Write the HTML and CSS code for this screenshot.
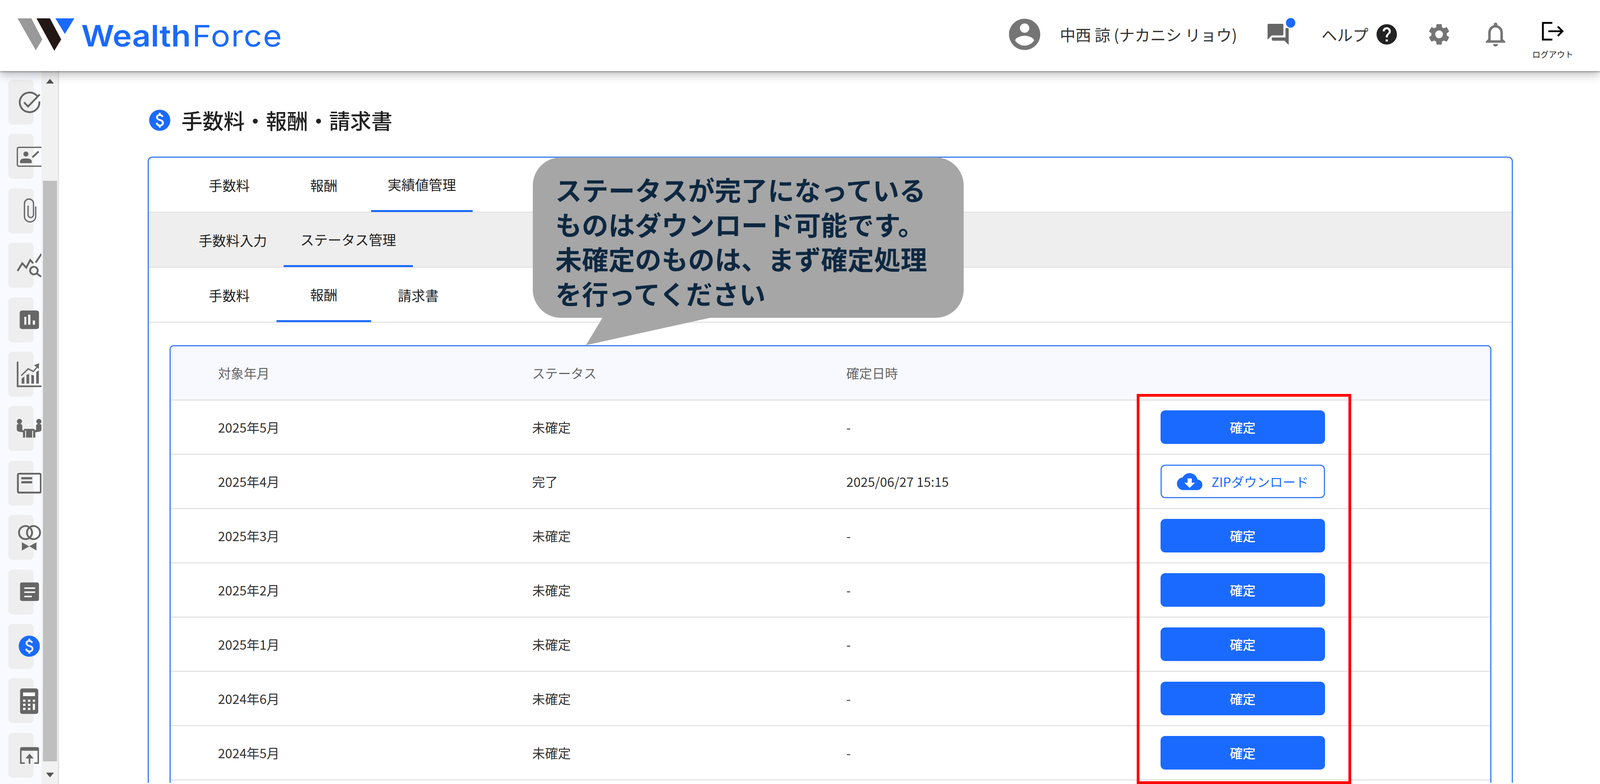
FILE: index.html
```html
<!DOCTYPE html>
<html lang="ja">
<head>
    <meta charset="UTF-8">
    <title>WealthForce 手数料・報酬・請求書</title>
    <link rel="stylesheet" href="styles.css">
</head>
<body>
    <header class="header">
        <svg class="logo-mark" viewBox="48 43 156 90">
            <polygon fill="#999999" points="48,44 86,44 116,102 98,132"/>
            <polygon fill="#231815" points="100,44 137,44 168,102 149,133"/>
            <polygon fill="#1a6aff" points="152,44 204,44 178,87"/>
        </svg>
        <div class="logo-text"><span class="logo-strong">Wealth</span><span class="logo-light">Force</span></div>
        <div class="header-right">
            <svg class="avatar" viewBox="2 2 20 20"><path d="M12 2C6.48 2 2 6.48 2 12s4.48 10 10 10 10-4.48 10-10S17.52 2 12 2zm0 3c1.66 0 3 1.34 3 3s-1.34 3-3 3-3-1.34-3-3 1.34-3 3-3zm0 14.2c-2.5 0-4.71-1.28-6-3.22.03-1.99 4-3.08 6-3.08 1.99 0 5.97 1.09 6 3.08-1.29 1.94-3.5 3.22-6 3.22z"/></svg>
            <span class="user-name">中西 諒 (ナカニシ リョウ)</span>
            <div class="chat">
                <svg class="chat-icon" viewBox="2 2 20 20"><path d="M21 6h-2v9H6v2c0 .55.45 1 1 1h11l4 4V7c0-.55-.45-1-1-1zm-4 6V3c0-.55-.45-1-1-1H3c-.55 0-1 .45-1 1v14l4-4h10c.55 0 1-.45 1-1z"/></svg>
                <span class="chat-dot"></span>
            </div>
            <span class="help-label">ヘルプ</span>
            <svg class="help-icon" viewBox="2 2 20 20"><path d="M12 2C6.48 2 2 6.48 2 12s4.48 10 10 10 10-4.48 10-10S17.52 2 12 2zm1 17h-2v-2h2v2zm2.07-7.75l-.9.92C13.45 12.9 13 13.5 13 15h-2v-.5c0-1.1.45-2.1 1.17-2.83l1.24-1.26c.37-.36.59-.86.59-1.41 0-1.1-.9-2-2-2s-2 .9-2 2H8c0-2.21 1.79-4 4-4s4 1.79 4 4c0 .88-.36 1.68-.93 2.25z"/></svg>
            <svg class="gear-icon" viewBox="2.5 2 19 20"><path d="M19.14 12.94c.04-.3.06-.61.06-.94 0-.32-.02-.64-.07-.94l2.03-1.58c.18-.14.23-.41.12-.61l-1.92-3.32c-.12-.22-.37-.29-.59-.22l-2.39.96c-.5-.38-1.03-.7-1.62-.94l-.36-2.54c-.04-.24-.24-.41-.48-.41h-3.84c-.24 0-.43.17-.47.41l-.36 2.54c-.59.24-1.13.57-1.62.94l-2.39-.96c-.22-.08-.47 0-.59.22L2.74 8.87c-.12.21-.08.47.12.61l2.03 1.58c-.05.3-.09.63-.09.94s.02.64.07.94l-2.03 1.58c-.18.14-.23.41-.12.61l1.92 3.32c.12.22.37.29.59.22l2.39-.96c.5.38 1.03.7 1.62.94l.36 2.54c.05.24.24.41.48.41h3.84c.24 0 .44-.17.47-.41l.36-2.54c.59-.24 1.13-.56 1.62-.94l2.39.96c.22.08.47 0 .59-.22l1.92-3.32c.12-.22.07-.47-.12-.61l-2.01-1.58zM12 15.6c-1.98 0-3.6-1.62-3.6-3.6s1.62-3.6 3.6-3.6 3.6 1.62 3.6 3.6-1.62 3.6-3.6 3.6z"/></svg>
            <svg class="bell-icon" viewBox="4 2.5 16 19.5"><path d="M12 22c1.1 0 2-.9 2-2h-4c0 1.1.9 2 2 2zm6-6v-5c0-3.07-1.63-5.64-4.5-6.32V4c0-.83-.67-1.5-1.5-1.5s-1.5.67-1.5 1.5v.68C7.64 5.36 6 7.92 6 11v5l-2 2v1h16v-1l-2-2zm-2 1H8v-6c0-2.48 1.51-4.5 4-4.5s4 2.02 4 4.5v6z"/></svg>
            <div class="logout">
                <svg class="logout-icon" viewBox="0 0 60 52">
                    <path d="M29 3H3v46h26"/>
                    <path d="M18 26h38"/>
                    <path d="M44 13l13 13-13 13"/>
                </svg>
                <span class="logout-label">ログアウト</span>
            </div>
        </div>
    </header>

    <div class="shell">
        <aside class="sidebar">
            <nav class="side-nav">
                <div class="side-tile">
                    <svg class="side-icon" viewBox="0 0 68 68">
                        <path class="ln" d="M55.7 16.6A27 27 0 1 0 62 31.6"/>
                        <path class="ln" d="M20 34l11 11.500 32-33"/>
                    </svg>
                </div>
                <div class="side-tile">
                    <svg class="side-icon" viewBox="0 0 68 68">
                        <rect class="ln thin" x="1.500" y="8.500" width="72" height="52" rx="4"/>
                        <circle class="fl" cx="25" cy="27" r="7"/>
                        <path class="fl" d="M9 52v-5q0-8 16-8t16 8v5z"/>
                        <path class="ln" d="M43 36l17-16"/>
                    </svg>
                </div>
                <div class="side-tile">
                    <svg class="side-icon" viewBox="0 0 68 68">
                        <path class="ln thin" d="M52 22V49A15.500 15.500 0 0 1 21 49V14A12.500 12.500 0 0 1 46 14V45A7.500 7.500 0 0 1 31 45V20"/>
                    </svg>
                </div>
                <div class="side-tile">
                    <svg class="side-icon" viewBox="0 0 68 68">
                        <path class="ln" d="M2 49l13-21 11 12 11-21 8 9"/>
                        <path class="ln" d="M52 26L68 2"/>
                        <circle class="ln" cx="47" cy="48" r="10.500"/>
                        <path class="ln" d="M55 56l12 9"/>
                    </svg>
                </div>
                <div class="side-tile">
                    <svg class="side-icon" viewBox="0 0 68 68">
                        <rect class="fl" x="8" y="8.500" width="53" height="51" rx="6"/>
                        <rect class="wh" x="20.700" y="26" width="5.500" height="21.500"/>
                        <rect class="wh" x="31.300" y="20" width="6" height="27.500"/>
                        <rect class="wh" x="44" y="36" width="6" height="11.500"/>
                    </svg>
                </div>
                <div class="side-tile">
                    <svg class="side-icon" viewBox="0 0 68 68">
                        <path class="fl" d="M0 0h4.500v65.500H68V70H0z"/>
                        <path class="fl" d="M13.300 46l7.400-5v19.300h-7.400zM26.700 36l7.300-2v26.300h-7.300zM40 36l7.300 2v22.300H40zM53.300 28l7.400-4v36.300h-7.400z"/>
                        <path class="ln thin" d="M12.300 38.500l19-18.900 14.400 7.100 12-14"/>
                        <path class="fl" d="M47.300 9.600l14-5.100-.6 15.500z"/>
                    </svg>
                </div>
                <div class="side-tile">
                    <svg class="side-icon" viewBox="0 0 68 68">
                        <circle class="fl" cx="7.300" cy="14" r="7"/>
                        <circle class="fl" cx="60.700" cy="14" r="7"/>
                        <path class="fl" d="M0 25q0-4 5-4h4q6 0 6 5v11l8 3v18.500h-6V44l-11-2q-6-1-6-6z"/>
                        <path class="fl" d="M68 25q0-4-5-4h-4q-6 0-6 5v11l-8 3v18.500h6V44l11-2q6-1 6-6z"/>
                        <rect class="fl" x="19.700" y="34.500" width="29.300" height="5"/>
                        <rect class="fl" x="25.700" y="39" width="16.600" height="19.500"/>
                    </svg>
                </div>
                <div class="side-tile">
                    <svg class="side-icon" viewBox="0 0 68 68">
                        <rect class="ln" x="3" y="8.500" width="63" height="52" rx="3"/>
                        <rect class="fl" x="12.300" y="18" width="30" height="6"/>
                        <rect class="fl" x="12.300" y="29" width="30" height="6"/>
                    </svg>
                </div>
                <div class="side-tile">
                    <svg class="side-icon" viewBox="0 0 68 68">
                        <circle class="ln" cx="24" cy="20" r="18"/>
                        <circle class="ln" cx="46" cy="20" r="18"/>
                        <path class="fl" d="M14 47l20 11 20-11v22.500L35 58 14 69.500z"/>
                    </svg>
                </div>
                <div class="side-tile">
                    <svg class="side-icon" viewBox="0 0 68 68">
                        <rect class="fl" x="9" y="8" width="52" height="51" rx="5"/>
                        <rect class="wh" x="20.700" y="21.600" width="30" height="4"/>
                        <rect class="wh" x="20.700" y="32.700" width="30" height="4"/>
                        <rect class="wh" x="20.700" y="44.600" width="20.600" height="4"/>
                    </svg>
                </div>
                <div class="side-tile">
                    <svg class="side-icon side-dollar" viewBox="2 2 20 20"><path d="M12 2C6.48 2 2 6.48 2 12s4.48 10 10 10 10-4.48 10-10S17.52 2 12 2zm.88 15.760V19h-1.750v-1.290c-.74-.18-2.390-.77-3.020-2.960l1.650-.67c.06.22.58 2.090 2.400 2.090.93 0 1.980-.48 1.980-1.610 0-.96-.7-1.460-2.280-2.030-1.100-.39-3.350-1.030-3.350-3.310 0-.1.01-2.400 2.620-2.960V5h1.750v1.240c1.840.32 2.510 1.790 2.660 2.230l-1.580.67c-.11-.35-.59-1.340-1.900-1.340-.7 0-1.810.37-1.810 1.390 0 .95.86 1.310 2.640 1.900 2.400.83 3.010 2.050 3.010 3.450 0 2.630-2.500 3.130-3.020 3.220z"/></svg>
                </div>
                <div class="side-tile">
                    <svg class="side-icon" viewBox="0 0 68 68">
                        <rect class="fl" x="9" y="0" width="50" height="70" rx="6"/>
                        <rect class="wh" x="17.300" y="11" width="32.700" height="10"/>
                        <rect class="wh" x="17.300" y="30.700" width="6.700" height="6"/>
                        <rect class="wh" x="30.700" y="30.700" width="6.600" height="6"/>
                        <rect class="wh" x="44" y="30.700" width="6" height="6"/>
                        <rect class="wh" x="17.300" y="42" width="6.700" height="6"/>
                        <rect class="wh" x="30.700" y="42" width="6.600" height="6"/>
                        <rect class="wh" x="44" y="42" width="6" height="17"/>
                        <rect class="wh" x="17.300" y="53.200" width="6.700" height="6"/>
                        <rect class="wh" x="30.700" y="53.200" width="6.600" height="6"/>
                    </svg>
                </div>
                <div class="side-tile">
                    <svg class="side-icon" viewBox="0 0 68 68">
                        <path class="fl" d="M14 12h42q5 0 5 5v41H48v-4h9V22H13v32h9v4H9V17q0-5 5-5z"/>
                        <path class="fl" d="M35 30l11.300 13H37.300v15h-4.500V43H24z"/>
                    </svg>
                </div>
            </nav>
            <div class="scrollbar">
                <div class="scroll-top"><span class="arrow-up"></span></div>
                <div class="scroll-thumb"></div>
                <div class="scroll-bottom"><span class="arrow-down"></span></div>
            </div>
        </aside>

        <main class="main">
            <div class="page-title">
                <svg class="title-icon" viewBox="2 2 20 20"><path d="M12 2C6.48 2 2 6.48 2 12s4.48 10 10 10 10-4.48 10-10S17.52 2 12 2zm.88 15.760V19h-1.750v-1.290c-.74-.18-2.390-.77-3.020-2.960l1.650-.67c.06.22.58 2.090 2.400 2.090.93 0 1.980-.48 1.980-1.610 0-.96-.7-1.460-2.280-2.030-1.100-.39-3.350-1.030-3.350-3.310 0-.1.01-2.400 2.620-2.960V5h1.750v1.240c1.840.32 2.510 1.790 2.660 2.230l-1.580.67c-.11-.35-.59-1.340-1.900-1.340-.7 0-1.810.37-1.810 1.390 0 .95.86 1.310 2.640 1.900 2.400.83 3.010 2.050 3.010 3.450 0 2.630-2.500 3.130-3.020 3.220z"/></svg>
                <h1 class="title-text">手数料・報酬・請求書</h1>
            </div>

            <section class="card">
                <div class="tab-row">
                    <div class="tab">手数料</div>
                    <div class="tab">報酬</div>
                    <div class="tab active">実績値管理</div>
                </div>
                <div class="tab-row tab-row-grey">
                    <div class="tab">手数料入力</div>
                    <div class="tab active">ステータス管理</div>
                </div>
                <div class="tab-row">
                    <div class="tab">手数料</div>
                    <div class="tab active">報酬</div>
                    <div class="tab">請求書</div>
                </div>

                <div class="table-wrap">
                    <div class="table-head row">
                        <div>対象年月</div>
                        <div>ステータス</div>
                        <div>確定日時</div>
                        <div></div>
                    </div>
                    <div class="row">
                        <div>2025年5月</div>
                        <div>未確定</div>
                        <div>-</div>
                        <div><button class="btn">確定</button></div>
                    </div>
                    <div class="row">
                        <div>2025年4月</div>
                        <div>完了</div>
                        <div>2025/06/27 15:15</div>
                        <div>
                            <button class="btn btn-outline">
                                <svg class="cloud-icon" viewBox="0 4 24 16"><path d="M19.350 10.040C18.670 6.590 15.640 4 12 4 9.110 4 6.600 5.640 5.350 8.040 2.340 8.360 0 10.910 0 14c0 3.310 2.690 6 6 6h13c2.760 0 5-2.240 5-5 0-2.640-2.050-4.780-4.650-4.960zM17 13l-5 5-5-5h3V9h4v4h3z"/></svg>
                                ZIPダウンロード
                            </button>
                        </div>
                    </div>
                    <div class="row">
                        <div>2025年3月</div>
                        <div>未確定</div>
                        <div>-</div>
                        <div><button class="btn">確定</button></div>
                    </div>
                    <div class="row">
                        <div>2025年2月</div>
                        <div>未確定</div>
                        <div>-</div>
                        <div><button class="btn">確定</button></div>
                    </div>
                    <div class="row">
                        <div>2025年1月</div>
                        <div>未確定</div>
                        <div>-</div>
                        <div><button class="btn">確定</button></div>
                    </div>
                    <div class="row">
                        <div>2024年6月</div>
                        <div>未確定</div>
                        <div>-</div>
                        <div><button class="btn">確定</button></div>
                    </div>
                    <div class="row">
                        <div>2024年5月</div>
                        <div>未確定</div>
                        <div>-</div>
                        <div><button class="btn">確定</button></div>
                    </div>
                </div>
            </section>
        </main>
    </div>

    <!-- annotations drawn over the screen -->
    <div class="callout">
        ステータスが完了になっている<br>
        ものはダウンロード可能です。<br>
        未確定のものは、まず確定処理<br>
        を行ってください
        <svg class="callout-tail" viewBox="0 0 350 72" preserveAspectRatio="none"><polygon points="46,0 0,71 346,0"/></svg>
    </div>
    <div class="red-box"></div>
</body>
</html>
```

FILE: styles.css
```css
/* horizontal sizes follow the window: --u is one pixel of a 4400px wide design */
:root {
    --u: calc(100vw / 4400);
}

* {
    margin: 0;
    padding: 0;
    box-sizing: border-box;
}

body {
    position: relative;
    width: 100%;
    height: 2008px;
    overflow: hidden;
    background: #fff;
    color: #222;
    font-family: "Noto Sans CJK JP", "Noto Sans", sans-serif;
}

/* header */
.header {
    position: relative;
    z-index: 5;
    display: flex;
    align-items: center;
    height: 182px;
    padding: 0 calc(73 * var(--u)) 6px calc(48 * var(--u));
    background: #fff;
    box-shadow: 0 3px 3px rgba(0,0,0,0.25), 0 8px 24px rgba(0,0,0,0.28);
}

.logo-mark {
    width: calc(156 * var(--u));
    height: 90px;
    flex: none;
}

.logo-text {
    margin: 6px 0 0 calc(19 * var(--u));
    font-family: Inter, sans-serif;
    font-size: 76px;
    line-height: 1;
    color: #1a6aff;
    white-space: nowrap;
    transform: scaleX(1.09);
    transform-origin: left center;
}

.logo-strong {
    font-weight: 600;
}

.logo-light {
    margin-left: 3px;
    font-weight: 400;
    letter-spacing: 2px;
}

.header-right {
    display: flex;
    align-items: center;
    margin-left: auto;
}

.avatar {
    width: calc(86 * var(--u));
    height: 86px;
    fill: #757575;
}

.user-name {
    margin-left: calc(54 * var(--u));
    font-size: 40px;
    color: #333;
    white-space: nowrap;
}

.chat {
    position: relative;
    margin-left: calc(84 * var(--u));
    display: flex;
}

.chat-icon {
    width: calc(58 * var(--u));
    height: 58px;
    fill: #666;
}

.chat-dot {
    position: absolute;
    top: -13px;
    left: calc(50 * var(--u));
    width: 24px;
    height: 25px;
    border-radius: 50%;
    background: #1a6aff;
}

.help-label {
    margin-left: calc(90 * var(--u));
    font-size: 40px;
    color: #333;
}

.help-icon {
    width: calc(56 * var(--u));
    height: 56px;
    margin-left: calc(22 * var(--u));
    fill: #222;
}

.gear-icon {
    width: calc(56 * var(--u));
    height: 58px;
    margin-left: calc(88 * var(--u));
    fill: #757575;
}

.bell-icon {
    width: calc(55 * var(--u));
    height: 61px;
    margin-left: calc(100 * var(--u));
    fill: #757575;
}

.logout {
    display: flex;
    flex-direction: column;
    align-items: center;
    width: calc(114 * var(--u));
    margin: 27px 0 0 calc(73 * var(--u));
}

.logout-icon {
    width: calc(60 * var(--u));
    height: 52px;
    fill: none;
    stroke: #000;
    stroke-width: 5;
}

.logout-label {
    margin-top: 22px;
    font-size: 21px;
    line-height: 1;
    color: #222;
    white-space: nowrap;
}

/* sidebar */
.shell {
    display: flex;
    height: 1826px;
}

.sidebar {
    display: flex;
    flex: none;
    width: calc(162 * var(--u));
    background: #f8faff;
    border-right: 2px solid #d8d8d8;
}

.side-nav {
    display: flex;
    flex-direction: column;
    flex: none;
    width: calc(114 * var(--u));
    padding-top: 22px;
    gap: 24.4px;
    overflow: hidden;
}

.side-tile {
    display: flex;
    align-items: center;
    flex: none;
    width: calc(69 * var(--u));
    height: 115px;
    margin-left: calc(23 * var(--u));
    padding-left: calc(23 * var(--u));
    border-radius: 10px;
    background: #eee;
}

.side-icon {
    flex: none;
    width: calc(68 * var(--u));
    height: 68px;
    overflow: visible;
}

.side-dollar {
    width: calc(58 * var(--u));
    height: 58px;
    margin-left: calc(6 * var(--u));
    fill: #1a6aff;
}

.ln {
    fill: none;
    stroke: #666;
    stroke-width: 5;
}

.thin {
    stroke-width: 3.5;
}

.fl {
    fill: #666;
}

.wh {
    fill: #fff;
}

.scrollbar {
    display: flex;
    flex-direction: column;
    flex: 1;
    padding: 0 calc(3 * var(--u)) 0 calc(4 * var(--u));
    background: #f1f1f1;
}

.scroll-top {
    display: flex;
    justify-content: center;
    height: 281px;
    padding-top: 20px;
}

.scroll-thumb {
    flex: 1;
    background: #bfbfbf;
}

.scroll-bottom {
    display: flex;
    justify-content: center;
    height: 58px;
    padding-top: 29px;
}

.arrow-up {
    width: 0;
    height: 0;
    border-left: 10px solid transparent;
    border-right: 10px solid transparent;
    border-bottom: 12px solid #505050;
}

.arrow-down {
    width: 0;
    height: 0;
    border-left: 10px solid transparent;
    border-right: 10px solid transparent;
    border-top: 12px solid #505050;
}

/* main */
.main {
    flex: 1;
    height: 1823px;
    overflow: hidden;
    padding: 92px calc(240 * var(--u)) 0 calc(244 * var(--u));
}

.page-title {
    display: flex;
    align-items: center;
    height: 68px;
    margin-bottom: 59px;
    padding-left: calc(4 * var(--u));
}

.title-icon {
    width: calc(58 * var(--u));
    height: 58px;
    fill: #1a6aff;
}

.title-text {
    margin-left: calc(31 * var(--u));
    font-size: 54px;
    font-weight: 500;
    line-height: 1;
    color: #222;
}

.card {
    border: 3px solid #3b7ff5;
    border-radius: 12px;
    background: #fff;
    height: 1700px;
}

.tab-row {
    display: flex;
    height: 141px;
    padding-left: calc(91 * var(--u));
    border-bottom: 3px solid #e5e5e5;
}

.tab-row-grey {
    background: #eee;
}

.tab {
    display: flex;
    align-items: center;
    justify-content: center;
    min-width: calc(260 * var(--u));
    padding: 0 calc(46 * var(--u));
    font-size: 35px;
    color: #222;
}

.tab.active {
    border-bottom: 5px solid #1a6aff;
    margin-bottom: -1px;
}

/* table */
.table-wrap {
    height: 1500px;
    margin: 57px calc(55 * var(--u)) 0 calc(57 * var(--u));
    border: 3px solid #3b7ff5;
    border-radius: 10px;
}

.row {
    display: grid;
    grid-template-columns: repeat(3, calc(864 * var(--u))) 1fr;
    align-items: center;
    height: 139px;
    padding-left: calc(130 * var(--u));
    border-bottom: 3px solid #e4e4e4;
    font-size: 33px;
    color: #333;
}

.table-head {
    background: #f7f9ff;
    color: #666;
    border-top-left-radius: 8px;
    border-top-right-radius: 8px;
}

.btn {
    display: flex;
    align-items: center;
    justify-content: center;
    width: calc(452 * var(--u));
    height: 86px;
    border: none;
    border-radius: 12px;
    background: #1a6aff;
    font-family: inherit;
    font-size: 33px;
    font-weight: 500;
    color: #fff;
}

.btn-outline {
    background: #fff;
    border: 3px solid #3b7ff5;
    color: #1a6aff;
    font-weight: 400;
    gap: calc(25 * var(--u));
}

.cloud-icon {
    width: calc(70 * var(--u));
    height: 47px;
    fill: #1a6aff;
}

/* annotations */
.callout {
    position: absolute;
    left: calc(1465 * var(--u));
    top: 403px;
    width: calc(1185 * var(--u));
    height: 411px;
    z-index: 3;
    padding: 38px 0 0 calc(62 * var(--u));
    border-radius: 72px;
    background: #a6a6a6;
    font-size: 68px;
    font-weight: 700;
    line-height: 88.6px;
    color: #0e2841;
    white-space: nowrap;
}

.callout-tail {
    position: absolute;
    left: calc(146 * var(--u));
    top: 410px;
    width: calc(350 * var(--u));
    height: 72px;
    fill: #a6a6a6;
}

.red-box {
    position: absolute;
    left: calc(3126 * var(--u));
    top: 1009px;
    width: calc(590 * var(--u));
    height: 999px;
    z-index: 4;
    border: 7px solid #f00;
}
```
